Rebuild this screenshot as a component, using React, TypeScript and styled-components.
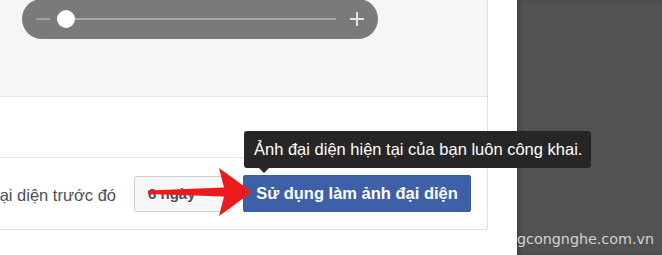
import styled, { createGlobalStyle } from 'styled-components';

const GlobalStyle = createGlobalStyle`
  html, body {
    margin: 0;
    padding: 0;
    overflow: hidden;
    background: #ffffff;
    font-family: 'Liberation Sans', Arial, sans-serif;
  }
`;

const Page = styled.div`
  display: flex;
  width: 662px;
  height: 255px;
`;

const LeftPane = styled.div`
  width: 517px;
  flex-shrink: 0;
  background: #ffffff;
`;

const Card = styled.div`
  width: 487px;
  border: 1px solid #dddfe2;
  border-left: none;
  border-top: none;
  border-radius: 0 0 3px 0;
  background: #ffffff;
`;

const Preview = styled.div`
  height: 97px;
  background: #f5f6f7;
  border-bottom: 1px solid #e5e6e9;
  padding-left: 22px;
`;

const ZoomSlider = styled.div`
  display: flex;
  align-items: center;
  width: 356px;
  height: 40px;
  margin-top: -1px;
  padding: 0 14px;
  box-sizing: border-box;
  border-radius: 20px;
  background: #7a7a7a;
`;

const Minus = styled.span`
  width: 14px;
  height: 2px;
  background: #a0a0a0;
  flex-shrink: 0;
`;

const Track = styled.div`
  position: relative;
  flex: 1;
  height: 2px;
  margin-left: 7px;
  background: #a9a9a9;
`;

const Thumb = styled.span`
  position: absolute;
  left: 0;
  top: -8px;
  width: 18px;
  height: 18px;
  border-radius: 50%;
  background: #ffffff;
`;

const Plus = styled.span`
  position: relative;
  width: 14px;
  height: 14px;
  margin-left: 14px;
  flex-shrink: 0;
  &::before,
  &::after {
    content: '';
    position: absolute;
    background: #e4e4e4;
  }
  &::before {
    left: 0;
    top: 6px;
    width: 14px;
    height: 2px;
  }
  &::after {
    left: 6px;
    top: 0;
    width: 2px;
    height: 14px;
  }
`;

const Spacer = styled.div`
  height: 60px;
`;

const Footer = styled.div`
  display: flex;
  justify-content: flex-end;
  align-items: center;
  height: 71px;
  padding-right: 16px;
  border-top: 1px solid #e5e6e9;
`;

const Label = styled.span`
  flex-shrink: 0;
  white-space: nowrap;
  font-size: 16.5px;
  color: #4b4f56;
  margin: 4px 18px 0 0;
`;

const Select = styled.div`
  display: flex;
  align-items: center;
  justify-content: space-between;
  width: 97px;
  height: 36px;
  padding: 0 10px 0 13px;
  box-sizing: border-box;
  border: 1px solid #ccd0d5;
  border-radius: 2px;
  background: #f6f7f9;
  font-size: 15px;
  font-weight: bold;
  color: #4b4f56;
  flex-shrink: 0;
`;

const Caret = styled.span`
  width: 0;
  height: 0;
  border-left: 4px solid transparent;
  border-right: 4px solid transparent;
  border-top: 5px solid #4b4f56;
`;

const ButtonWrap = styled.div`
  position: relative;
  margin-left: 12px;
  flex-shrink: 0;
`;

const PrimaryButton = styled.button`
  height: 37px;
  width: 228px;
  padding: 0;
  border: 1px solid #3b5ca3;
  border-radius: 2px;
  background: #3e60a8;
  color: #ffffff;
  font-family: 'Liberation Sans', Arial, sans-serif;
  font-size: 16.5px;
  font-weight: bold;
  cursor: pointer;
`;

const Tooltip = styled.div`
  position: absolute;
  left: 1px;
  bottom: calc(100% + 7px);
  z-index: 2;
  height: 37px;
  line-height: 37px;
  padding: 0 9px 0 10px;
  border-radius: 3px;
  background: #262626;
  color: #ffffff;
  font-size: 16.5px;
  white-space: nowrap;
  &::after {
    content: '';
    position: absolute;
    left: 15px;
    top: 100%;
    border-left: 5px solid transparent;
    border-right: 5px solid transparent;
    border-top: 5px solid #262626;
  }
`;

const Pointer = styled.svg`
  position: absolute;
  left: -95px;
  top: -7px;
  z-index: 1;
  pointer-events: none;
`;

const RightPane = styled.div`
  flex: 1;
  display: flex;
  align-items: flex-end;
  justify-content: flex-end;
  padding: 0 10px 8px 0;
  background: #525253;
  box-shadow: inset 4px 0 6px -3px rgba(0, 0, 0, 0.35);
`;

const Watermark = styled.span`
  font-family: 'DejaVu Sans', sans-serif;
  font-size: 14.3px;
  color: #d2d2d2;
  white-space: nowrap;
`;

const RedArrow = () => (
  <Pointer width="106" height="50" viewBox="0 0 106 50">
    <polygon
      points="0,22.5 76,19.5 71,0 104,24 71,48 76,28.5 0,26"
      fill="#ec1a1d"
    />
  </Pointer>
);

export default function App() {
  return (
    <>
      <GlobalStyle />
      <Page>
        <LeftPane>
          <Card>
            <Preview>
              <ZoomSlider>
                <Minus />
                <Track>
                  <Thumb />
                </Track>
                <Plus />
              </ZoomSlider>
            </Preview>
            <Spacer />
            <Footer>
              <Label>Chuyển về ảnh đại diện trước đó</Label>
              <Select>
                <span>6 ngày</span>
                <Caret />
              </Select>
              <ButtonWrap>
                <Tooltip>Ảnh đại diện hiện tại của bạn luôn công khai.</Tooltip>
                <RedArrow />
                <PrimaryButton>Sử dụng làm ảnh đại diện</PrimaryButton>
              </ButtonWrap>
            </Footer>
          </Card>
        </LeftPane>
        <RightPane>
          <Watermark>gcongnghe.com.vn</Watermark>
        </RightPane>
      </Page>
    </>
  );
}
